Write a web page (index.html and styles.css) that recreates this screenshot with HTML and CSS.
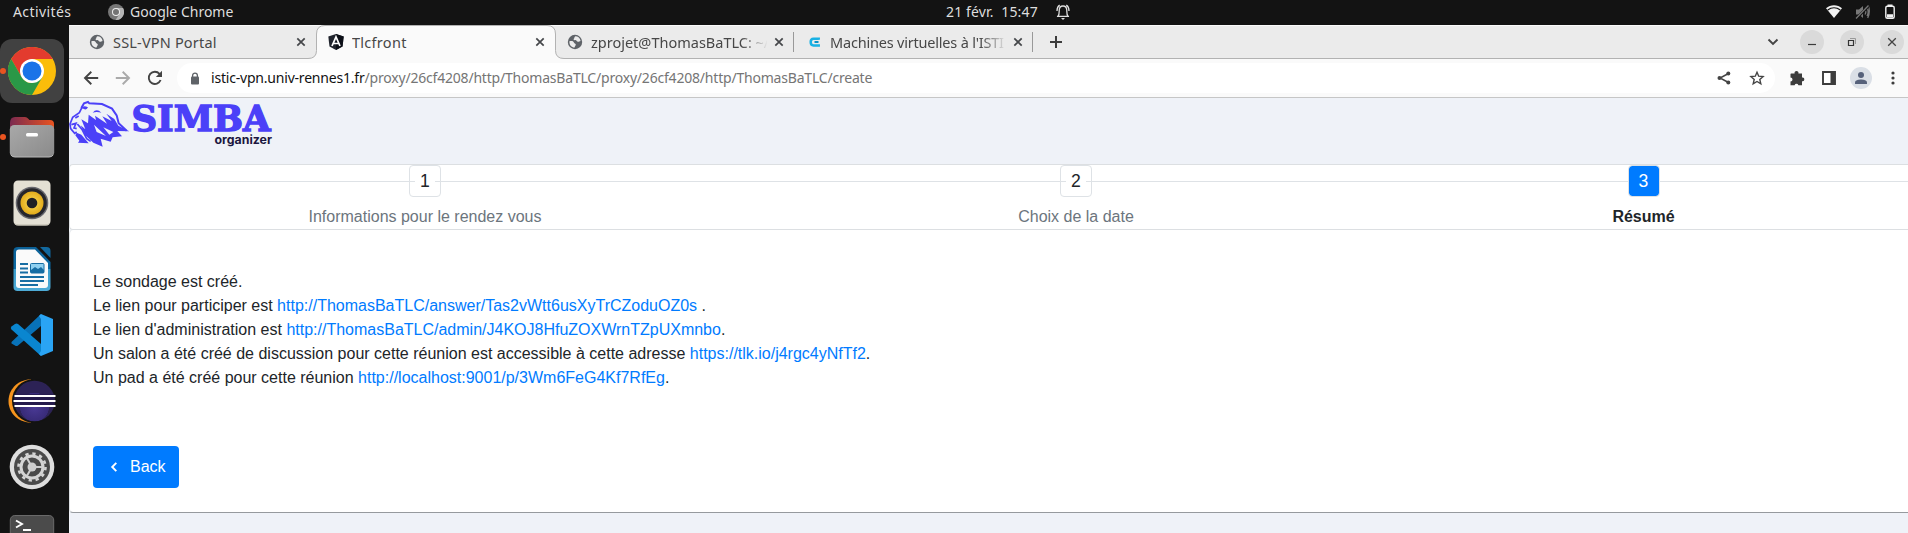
FILE: index.html
```html
<!DOCTYPE html>
<html lang="fr">
<head>
<meta charset="utf-8">
<title>Tlcfront</title>
<link rel="stylesheet" href="styles.css">
</head>
<body>
<svg width="0" height="0" class="defs">
  <defs>
    <linearGradient id="gFiles" x1="0" y1="0" x2="1" y2="1"><stop offset="0" stop-color="#a9a9a9"/><stop offset="1" stop-color="#8a8a8a"/></linearGradient>
    <linearGradient id="gFolder" x1="0" y1="0" x2="1" y2="0"><stop offset="0" stop-color="#7b2a50"/><stop offset="1" stop-color="#e95420"/></linearGradient>
    <linearGradient id="gDoc" x1="0" y1="0" x2="0" y2="1"><stop offset="0" stop-color="#0b6096"/><stop offset=".5" stop-color="#0b6ba5"/><stop offset=".5" stop-color="#3a9ccb"/><stop offset="1" stop-color="#4eabd6"/></linearGradient>
    <radialGradient id="gEcl" cx=".5" cy=".65" r=".5"><stop offset="0" stop-color="#4a3a96"/><stop offset=".7" stop-color="#382b78"/><stop offset=".72" stop-color="#2c2255"/></radialGradient>
    <radialGradient id="gSpk"><stop offset="0" stop-color="#fbdc58"/><stop offset="1" stop-color="#e3ac1c"/></radialGradient>
    <symbol id="globe" viewBox="0 0 16 16"><circle cx="8" cy="8" r="7.2" fill="#5f6368"/><path d="M2.4 7.3C5 6.6 6.6 7.2 7 8.7c.2 1 1.8.6 1.8 1.8S7.700 12.400 7.600 13.600C4.500 13.500 2.400 11 2.400 8zM8.200 2.300C7 3.200 7.800 4.100 6.800 4.800c-.8.6.1 1.500 1.400 1.300 1.400-.2 1.200 1.600 2.600 1.600 1.200 0 1.700-.3 2.800-.7A5.700 5.700 0 0 0 8.200 2.300z" fill="#ececec"/></symbol>
    <symbol id="close" viewBox="0 0 16 16"><path d="M4.300 4.300l7.400 7.400M11.700 4.300l-7.400 7.400" stroke="#45474a" stroke-width="1.700" fill="none"/></symbol>
  </defs>
</svg>

<header class="topbar">
  <span class="activities">Activités</span>
  <span class="app">
    <svg width="16" height="16" viewBox="0 0 16 16"><circle cx="8" cy="8" r="8" fill="#777"/><path d="M8 8V4h7A8 8 0 0 1 7.600 16L11.500 10z" fill="#b4b4b4"/><circle cx="8" cy="8" r="4" fill="#eee"/><circle cx="8" cy="8" r="3" fill="#737373"/></svg>
    <span class="app-name">Google Chrome</span>
  </span>
  <span class="clock">21 févr.&nbsp; 15:47</span>
  <svg class="bell" width="16" height="18" viewBox="0 0 16 18" fill="none" stroke="#dedede" stroke-width="1.300"><path d="M3 13.300c1.300-1.600 1.200-3.300 1.200-5.500C4.200 4.800 5.500 3 8 3s3.800 1.800 3.800 4.800c0 2.200-.1 3.900 1.200 5.500zM2 13.300h12M2 8c0-3 .8-4.700 2.700-5.900M14 8c0-3-.8-4.700-2.700-5.900"/><path d="M6 15h4l-2 2z" fill="#dedede" stroke="none"/></svg>
  <span class="tray">
    <svg width="16" height="14" viewBox="0 0 16 14"><path d="M0 3.200C4.500-.9 11.500-.9 16 3.200L8 13z" fill="#f2f2f2"/><path d="M1.700 5C5.500 2 10.500 2 14.300 5" stroke="#131313" fill="none" stroke-width="1.200"/></svg>
    <svg width="16" height="16" viewBox="0 0 16 16" fill="none" stroke="#777" stroke-width="1.300"><path d="M1 5.500h3L8 2v12l-4-3.500H1z" fill="#777" stroke="none"/><path d="M10 5.500q1.600 2.500 0 5M12 4q2.400 4 0 8M13.500 2q2 6-.8 12"/><path d="M1 15L14 1.500" stroke="#131313" stroke-width="2.600"/><path d="M1 14.500L13.500 1.500"/></svg>
    <svg width="12" height="16" viewBox="0 0 12 16"><rect x="1.800" y="2.200" width="8.400" height="12" rx="1.500" fill="none" stroke="#f2f2f2" stroke-width="1.400"/><path d="M3.500.6h5v1.500h-5zM3 10.300h6v3.200H3z" fill="#f2f2f2"/></svg>
  </span>
</header>

<div class="desktop">
  <nav class="dock">
    <div class="dock-item running focused"><svg width="48" height="48" viewBox="0 0 48 48"><circle cx="24" cy="24" r="24" fill="#fbbd0a"/><path d="M24 24V12h20.800A24 24 0 0 0 3.200 12L13.600 30z" fill="#e33b2e"/><path d="M3.200 12L13.600 30Q18 36.500 24 36l10.400-6L24 48A24 24 0 0 1 3.200 12z" fill="#2a9847"/><circle cx="24" cy="24" r="12" fill="#fff"/><circle cx="24" cy="24" r="9.500" fill="#1a73e8"/></svg></div>
    <div class="dock-item running"><svg width="48" height="48" viewBox="0 0 48 48"><path d="M2 10q0-6 5-6h10q2 0 3 1.500L21.500 7H42q4 0 4 4v12H2z" fill="url(#gFolder)"/><rect x="1.800" y="12" width="44.400" height="32" rx="4.500" fill="url(#gFiles)"/><path d="M3 42q1 2 4 2h34q3 0 4-2" fill="none" stroke="#b9b9b9"/><rect x="18" y="20" width="12" height="3.600" rx="1.500" fill="#fff"/></svg></div>
    <div class="dock-item"><svg width="48" height="48" viewBox="0 0 48 48"><rect x="5.500" y="1.500" width="37" height="45" rx="4.500" fill="#e4e0d4"/><path d="M7 45q1 1 4 1h26q3 0 4-1" stroke="#bdb9ab" fill="none"/><circle cx="24" cy="24" r="16.300" fill="#68686e"/><circle cx="24" cy="24" r="14.800" fill="#26262b"/><circle cx="24" cy="24" r="11.500" fill="url(#gSpk)"/><circle cx="24" cy="24" r="5.300" fill="#202024"/></svg></div>
    <div class="dock-item"><svg width="48" height="48" viewBox="0 0 48 48"><path d="M10 2h18l14.500 15v25q0 4-4 4h-29q-4 0-4-4V6q0-4 4.500-4z" fill="url(#gDoc)"/><path d="M32 2h6.500q4 0 4 4v7z" fill="#12699f"/><path d="M11 4.500h16L40 18v22q0 3-3 3H11q-3 0-3-3V7.500q0-3 3-3z" fill="#fafafa"/><path d="M12 19h8M12 23.500h8M12 27.500h8M12 32h24M12 36h24M12 40h18" stroke="#176da3" stroke-width="1.900"/><rect x="22.500" y="18.500" width="13.500" height="9.500" rx="1" fill="#8fd0f0" stroke="#176da3"/><path d="M23 28v-3l4-3 3 2 3-2 3 3v3z" fill="#176da3"/></svg></div>
    <div class="dock-item"><svg width="48" height="48" viewBox="0 0 48 48"><path d="M3.500 31L33 3v12L10 34.500q-1.500 1-3 0l-3.500-2z" fill="#0872b8"/><path d="M33 33v12L3.500 18.500q-1.500-1.500 0-3L7 13q1.500-1 3 0z" fill="#0a86d0"/><path d="M33 3l12 5v32l-12 5-2-2 2-3V8l-2-3z" fill="#2aa4f4"/></svg></div>
    <div class="dock-item"><svg width="48" height="48" viewBox="0 0 48 48"><path d="M23 2.200C-7 4-7 44 23 45.800z" fill="#f7941e"/><circle cx="26" cy="24" r="22" fill="#131313"/><circle cx="26.500" cy="24" r="20.300" fill="url(#gEcl)"/><path d="M6.500 17.300h40v12.800h-40z" fill="#251b4c"/><path d="M6.500 19h41M5.500 24h42M6.500 29h41" stroke="#fff" stroke-width="2.200"/></svg></div>
    <div class="dock-item"><svg width="48" height="48" viewBox="0 0 48 48"><circle cx="24" cy="24" r="22.300" fill="#dedede"/><circle cx="24" cy="24" r="18" fill="#4a4a4a"/><circle cx="24" cy="24" r="13.500" fill="none" stroke="#d4d4d4" stroke-width="2.600" stroke-dasharray="3.300 3.760"/><circle cx="24" cy="24" r="11" fill="none" stroke="#d4d4d4" stroke-width="3"/><circle cx="24" cy="24" r="4.500" fill="#cfcfcf"/><path d="M24 24h10M24 24l-5-8.700M24 24l-5 8.700" stroke="#cfcfcf" stroke-width="2"/></svg></div>
    <div class="dock-item"><svg width="48" height="48" viewBox="0 0 48 48"><rect x="2.300" y="6.500" width="43.400" height="40" rx="4.500" fill="#4b4b4b" stroke="#6a6a6a"/><path d="M8 11.500l6 3.500-6 3.500M15 21h8" stroke="#fff" stroke-width="1.900" fill="none"/></svg></div>
  </nav>

  <main class="browser">
    <div class="tabs">
      <div class="tab"><svg class="favicon"><use href="#globe"/></svg><span class="tab-title t1">SSL-VPN Portal</span><svg class="tab-close"><use href="#close"/></svg></div>
      <div class="tab active">
        <svg class="tab-shape" width="256" height="34" viewBox="0 0 256 34"><path d="M0 33.500q8.500 0 8.500-8V9q0-8.500 8.500-8.500h222q8.500 0 8.500 8.500v16.500q0 8 8.500 8V34H0z" fill="#fafafa"/><path d="M0 33.500q8.500 0 8.500-8V9q0-8.500 8.500-8.500h222q8.500 0 8.500 8.500v16.500q0 8 8.500 8" fill="none" stroke="#b2b2b2"/></svg>
        <svg class="favicon" viewBox="0 0 16 16"><path d="M8 0l7.700 2.600-1.200 10L8 16l-6.500-3.400L.3 2.600z" fill="#20242d"/><path d="M8 0l7.700 2.600-1.200 10L8 16z" fill="#0c0f17"/><path d="M4 12L8 2.800 12 12M5.500 9.500h5" stroke="#fff" stroke-width="1.700" fill="none"/></svg><span class="tab-title t2">Tlcfront</span><svg class="tab-close"><use href="#close"/></svg></div>
      <div class="tab ruled"><svg class="favicon"><use href="#globe"/></svg><span class="tab-title faded t3">zprojet@ThomasBaTLC: ~/</span><svg class="tab-close"><use href="#close"/></svg></div>
      <div class="tab ruled"><svg class="favicon" viewBox="0 0 16 16"><path d="M12.700 5.800V4.700H7.500Q4.700 4.700 4.700 8t2.800 3.500h5.200v-1.300" fill="none" stroke="#19b1e4" stroke-width="2.500"/><path d="M12.500 8H8.500" fill="none" stroke="#0a93c8" stroke-width="2"/></svg><span class="tab-title faded t4">Machines virtuelles à l'ISTI</span><svg class="tab-close"><use href="#close"/></svg></div>
      <svg class="new-tab" width="14" height="14" viewBox="0 0 14 14"><path d="M7 1v12M1 7h12" stroke="#3c3c3c" stroke-width="2"/></svg>
      <div class="window-buttons">
        <svg width="12" height="12" viewBox="0 0 12 12"><path d="M1.500 3.500L6 8l4.500-4.500" fill="none" stroke="#444" stroke-width="1.900"/></svg>
        <span class="round"><svg width="12" height="12" viewBox="0 0 12 12"><path d="M2 8.500h8" stroke="#3c3c3c" stroke-width="1.200"/></svg></span>
        <span class="round"><svg width="12" height="12" viewBox="0 0 12 12" fill="none"><path d="M4 2.500h5.500V8" stroke="#999"/><path d="M2.500 4.500h5v5h-5z" stroke="#333" stroke-width="1.200"/></svg></span>
        <span class="round"><svg width="12" height="12" viewBox="0 0 12 12"><path d="M2.200 2.200l7.600 7.600M9.800 2.200L2.200 9.800" stroke="#444" stroke-width="1.300"/></svg></span>
      </div>
    </div>

    <div class="toolbar">
      <div class="nav-buttons">
        <svg width="16" height="16" viewBox="0 0 16 16" fill="none" stroke="#444" stroke-width="1.900"><path d="M15.200 8H2.500M8.300 1.800L2 8l6.300 6.200"/></svg>
        <svg width="16" height="16" viewBox="0 0 16 16" fill="none" stroke="#aaa" stroke-width="1.900"><path d="M.8 8h12.700M7.700 1.800L14 8l-6.300 6.200"/></svg>
        <svg width="16" height="16" viewBox="0 0 16 16" fill="none" stroke="#444" stroke-width="1.900"><path d="M13.600 10A6.100 6.100 0 1 1 12.500 3.800L14 5.300"/><path d="M15 .8v6.200H8.800z" fill="#444" stroke="none"/></svg>
      </div>
      <div class="omnibox">
        <svg width="10" height="13" viewBox="0 0 10 13"><rect x="1" y="4.500" width="8" height="8" rx="1" fill="#5f6368"/><path d="M2.600 5V3.500a2.400 2.400 0 0 1 4.800 0V5" fill="none" stroke="#5f6368" stroke-width="1.300"/></svg>
        <span class="url"><b>istic-vpn.univ-rennes1.fr</b>/proxy/26cf4208/http/ThomasBaTLC/proxy/26cf4208/http/ThomasBaTLC/create</span>
        <svg class="share" width="14" height="14" viewBox="0 0 14 14"><path d="M11.500 2.500L3 7l8.500 4.500" fill="none" stroke="#444" stroke-width="1.500"/><circle cx="11.300" cy="2.500" r="2" fill="#444"/><circle cx="2.500" cy="7" r="2" fill="#444"/><circle cx="11.300" cy="11.500" r="2" fill="#444"/></svg>
        <svg width="16" height="16" viewBox="0 0 16 16"><path d="M8 2.200l1.700 4 4.400.4-3.300 2.900 1 4.300L8 11.500l-3.800 2.300 1-4.300-3.300-2.900 4.400-.4z" fill="none" stroke="#444" stroke-width="1.400"/></svg>
      </div>
      <div class="tools">
        <svg width="16" height="16" viewBox="0 0 16 16"><path d="M2 3.500h3.600a2 2 0 1 1 3.800 0h3.600v4a1.900 1.900 0 1 1 0 3.700v4H9.400a2 2 0 0 0-3.800 0H1.500v-3.600a2 2 0 0 0 0-4V4z" fill="#3c3c3c"/></svg>
        <svg width="16" height="16" viewBox="0 0 16 16"><path d="M2 2h12v12H2z" fill="#fff" stroke="#3c3c3c" stroke-width="1.900"/><path d="M9.500 2H14v12H9.500z" fill="#3c3c3c"/></svg>
        <svg width="22" height="22" viewBox="0 0 22 22"><circle cx="11" cy="11" r="11" fill="#dadfe6"/><circle cx="11" cy="8" r="3" fill="#56617a"/><path d="M5 17v-1.500C5 13.300 8.500 12.500 11 12.500s6 .8 6 3V17z" fill="#56617a"/></svg>
        <svg width="4" height="14" viewBox="0 0 4 14" fill="#3c3c3c"><circle cx="2" cy="2" r="1.600"/><circle cx="2" cy="7" r="1.600"/><circle cx="2" cy="12" r="1.600"/></svg>
      </div>
    </div>

    <section class="page">
      <div class="brand">
        <svg width="206" height="50" viewBox="0 0 206 50">
          <g transform="translate(-3 -4) scale(.33333)">
            <path d="M46 42L54 28l12-4 4 4 38 2 30 14 14 20 6 24 24 22" fill="none" stroke="#4b40f8" stroke-width="6"/>
            <path d="M68 62l22 16-3-13 36 24-14-22 28 14-16-22 24 16 12 20 33 17-36-1 14 16-28 3-6 13-30-9 6 24-28-12-24-22-14-30 14 12-12-30 20 12z" fill="#4b40f8"/>
            <path d="M84 92l36 34-28-12zM112 100l30 14-12 8z" fill="#eff2f8"/>
            <path d="M48 40l-8 16-20 14-8 20 2 14 12 14 6-4M28 72l10-6M16 92l14-4-6 14 8 2M34 90l14 16 14 28 12 8" fill="none" stroke="#4b40f8" stroke-width="5"/>
            <path d="M46 42q6-10 20-2-4 10-14 4zM80 56q12-14 26 0-14-4-26 0zM32 116l14 6 22 26-32-2 4-6-12-16z" fill="#4b40f8"/>
          </g>
          <text x="62.500" y="33" class="brand-name" textLength="139" lengthAdjust="spacingAndGlyphs">SIMBA</text>
          <text x="145.500" y="46" class="brand-sub" textLength="57.500" lengthAdjust="spacingAndGlyphs">organizer</text>
        </svg>
      </div>
      <ol class="steps">
        <li class="step"><span class="step-box"><span>1</span></span><span class="step-label">Informations pour le rendez vous</span></li>
        <li class="step"><span class="step-box"><span>2</span></span><span class="step-label">Choix de la date</span></li>
        <li class="step current"><span class="step-box"><span>3</span></span><span class="step-label">Résumé</span></li>
      </ol>
      <div class="card">
        <p>Le sondage est créé.<br>
        Le lien pour participer est <a>http://ThomasBaTLC/answer/Tas2vWtt6usXyTrCZoduOZ0s</a> .<br>
        Le lien d'administration est <a>http://ThomasBaTLC/admin/J4KOJ8HfuZOXWrnTZpUXmnbo</a>.<br>
        Un salon a été créé de discussion pour cette réunion est accessible à cette adresse <a>https://tlk.io/j4rgc4yNfTf2</a>.<br>
        Un pad a été créé pour cette réunion <a>http://localhost:9001/p/3Wm6FeG4Kf7RfEg</a>.</p>
        <button class="back" type="button"><svg width="8" height="12" viewBox="0 0 8 12"><path d="M6.300 1.800L2.200 6l4.100 4.200" fill="none" stroke="#fff" stroke-width="1.900"/></svg>Back</button>
      </div>
    </section>
  </main>
</div>
</body>
</html>
```

FILE: styles.css
```css
* { box-sizing: border-box; }
body { margin: 0; width: 1908px; height: 533px; overflow: hidden; background: #131313; font-family: "Noto Sans", sans-serif; }
svg { display: block; flex: none; }
.defs { position: absolute; }

.topbar { height: 25px; display: flex; align-items: center; padding: 0 0 2px 13px; color: #dedede; font-size: 14px; line-height: 23px; white-space: nowrap; }
.activities { width: 95px; letter-spacing: 0.4px; }
.app { display: flex; align-items: center; gap: 6px; width: 838px; }
.clock { width: 109px; letter-spacing: 0.15px; }
.tray { margin-left: auto; display: flex; align-items: center; gap: 13px; padding-right: 12px; }

.desktop { display: flex; height: 508px; }
.dock { width: 69px; flex: none; padding-top: 14px; overflow: hidden; }
.dock-item { position: relative; width: 64px; height: 66px; padding: 8px; }
.dock-item.focused { height: 64px; margin-bottom: 2px; background: #414141; border-radius: 12px; }
.running::before { content: ""; position: absolute; left: 0; top: 29px; width: 6px; height: 6px; border-radius: 50%; background: #e95420; }

.browser { flex: 1; min-width: 0; display: flex; flex-direction: column; }
.tabs { height: 34px; display: flex; align-items: center; padding-left: 8px; background: #ebebeb; border-top: 1px solid #fafafa; border-bottom: 1px solid #b2b2b2; }
.tab { position: relative; width: 239px; height: 32px; flex: none; display: flex; align-items: center; padding: 0 7px 0 12px; }
.favicon { width: 16px; height: 16px; margin-right: 8px; position: relative; }
.tab-title { position: relative; flex: 1; min-width: 0; height: 24px; line-height: 24px; overflow: hidden; white-space: nowrap; font-size: 14.5px; color: #474747; }
.t1 { letter-spacing: 0.18px; }
.t2 { letter-spacing: 0.28px; }
.t3 { letter-spacing: 0; }
.t4 { letter-spacing: -0.2px; }
.faded { -webkit-mask-image: linear-gradient(90deg, #000 150px, transparent 177px); mask-image: linear-gradient(90deg, #000 150px, transparent 177px); }
.tab-close { width: 16px; height: 16px; margin-left: 4px; position: relative; }
.tab-shape { position: absolute; left: -8px; top: -1px; }
.ruled::after { content: ""; position: absolute; right: 0; top: 6px; width: 1px; height: 20px; background: #999; }
.new-tab { margin-left: 16px; }
.window-buttons { margin-left: auto; display: flex; align-items: center; gap: 16px; padding-right: 4px; }
.window-buttons > svg { margin-right: 5px; }
.round { width: 24px; height: 24px; border-radius: 50%; background: #dadada; display: grid; place-items: center; }

.toolbar { height: 39px; display: flex; align-items: center; background: #fafafa; border-bottom: 1px solid #c6c6c6; }
.nav-buttons { display: flex; gap: 16px; padding-left: 14px; width: 108px; }
.omnibox { height: 30px; width: 1598px; border-radius: 15px; background: #fff; display: flex; align-items: center; padding: 0 10px 0 13px; }
.url { margin-left: 11px; flex: 1; font-size: 14px; line-height: 22px; padding-bottom: 1px; letter-spacing: -0.2px; color: #757575; white-space: nowrap; }
.url b { font-weight: 400; color: #111; }
.share { margin-right: 18px; }
.tools { display: flex; align-items: center; gap: 16px; padding-left: 14px; }
.tools svg:nth-child(3) { margin-left: -3px; }
.tools svg:nth-child(4) { margin-left: 3px; }

.page { flex: 1; background: #eff2f8; font-family: "Liberation Sans", Arial, sans-serif; font-size: 16px; line-height: 24px; color: #212529; overflow: hidden; }
.brand { height: 66px; }
.brand-name { font: 700 35px "DejaVu Serif", serif; fill: #4b40f8; stroke: #4b40f8; stroke-width: 1.4px; }
.brand-sub { font: 700 12px Inter, sans-serif; fill: #1b1740; }
.steps { list-style: none; margin: 0; padding: 0; height: 66px; display: grid; grid-template-columns: 710px 592px 543px; background: linear-gradient(#dee2e6, #dee2e6) 0 16px / 100% 1px no-repeat #fff; border: 1px solid #dcdfe2; border-width: 1px 0 1px 1px; border-radius: 4px 0 0 4px; }
.step { display: flex; flex-direction: column; align-items: center; color: #6c757d; }
.step-box { width: 32px; height: 32px; border: 1px solid #dee2e6; border-radius: 4px; display: grid; place-items: center; font-size: 17.6px; line-height: 28px; color: #212529; }
.step-box span { background: #fff; padding: 0 5px; }
.step-label { margin-top: 8px; }
.current .step-box { background: #007bff; background-clip: padding-box; color: #fff; }
.current .step-box span { background: none; }
.current .step-label { color: #212529; font-weight: 700; }
.card { height: 283px; background: #fff; border-bottom: 1px solid #969a9e; border-left: 1px solid #dcdfe2; border-radius: 4px 0 0 4px; padding: 40px 23px 0; }
.card p { margin: 0 0 56px; }
.card a { color: #007bff; }
.back { display: flex; align-items: center; gap: 12px; width: 86px; height: 42px; border: 0; border-radius: 4px; padding: 0 0 0 17px; background: #007bff; color: #fff; font: 16px "Liberation Sans", Arial, sans-serif; }
```
